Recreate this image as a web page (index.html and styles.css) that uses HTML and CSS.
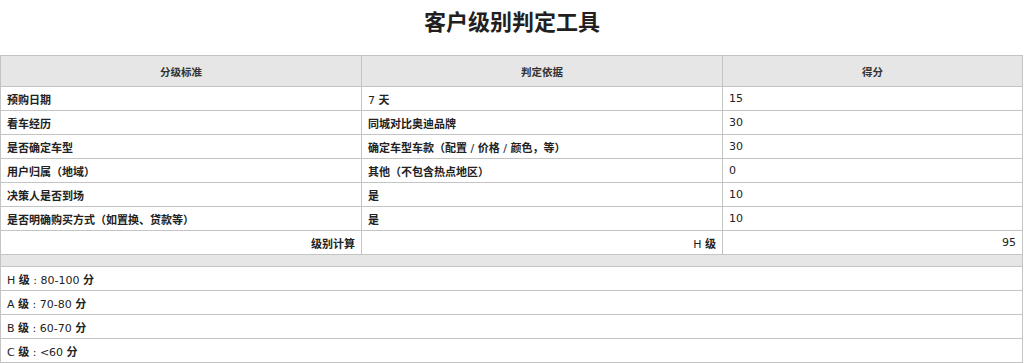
FILE: index.html
```html
<!DOCTYPE html>
<html lang="zh-CN">
<head>
<meta charset="utf-8">
<title>客户级别判定工具</title>
<link rel="stylesheet" href="styles.css">
</head>
<body>
<h1 class="title">客户级别判定工具</h1>
<table class="grid">
  <colgroup>
    <col class="c1">
    <col class="c2">
    <col class="c3">
  </colgroup>
  <thead>
    <tr class="head">
      <th>分级标准</th>
      <th>判定依据</th>
      <th>得分</th>
    </tr>
  </thead>
  <tbody>
    <tr><td>预购日期</td><td><span class="lat">7 </span>天</td><td class="num">15</td></tr>
    <tr><td>看车经历</td><td>同城对比奥迪品牌</td><td class="num">30</td></tr>
    <tr><td>是否确定车型</td><td>确定车型车款（配置<span class="lat"> / </span>价格<span class="lat"> / </span>颜色，等）</td><td class="num">30</td></tr>
    <tr><td>用户归属（地域）</td><td>其他（不包含热点地区）</td><td class="num">0</td></tr>
    <tr><td>决策人是否到场</td><td>是</td><td class="num">10</td></tr>
    <tr><td>是否明确购买方式（如置换、贷款等）</td><td>是</td><td class="num">10</td></tr>
    <tr class="total"><td>级别计算</td><td><span class="lat">H </span>级</td><td class="num">95</td></tr>
    <tr class="spacer"><td colspan="3"></td></tr>
    <tr class="level"><td colspan="3"><span class="lat">H </span>级<span class="lat"> : 80-100 </span>分</td></tr>
    <tr class="level"><td colspan="3"><span class="lat">A </span>级<span class="lat"> : 70-80 </span>分</td></tr>
    <tr class="level"><td colspan="3"><span class="lat">B </span>级<span class="lat"> : 60-70 </span>分</td></tr>
    <tr class="level"><td colspan="3"><span class="lat">C </span>级<span class="lat"> : &lt;60 </span>分</td></tr>
  </tbody>
</table>
</body>
</html>
```
FILE: styles.css
```css
html, body {
  margin: 0;
  padding: 0;
  background: #fff;
}
body {
  font-family: "DejaVu Sans", "Noto Sans CJK SC", sans-serif;
  color: #222;
}
.title {
  margin: 0;
  height: 55px;
  line-height: 40px;
  text-align: center;
  font-family: "Noto Sans CJK SC", sans-serif;
  font-size: 22px;
  font-weight: 700;
  color: #231f20;
}
.grid {
  width: 1023px;
  border-collapse: collapse;
  table-layout: fixed;
  font-size: 11px;
}
.c1 { width: 361px; }
.c2 { width: 361px; }
.grid th,
.grid td {
  border: 1px solid #c4c4c4;
  padding: 0 6px;
  height: 23px;
  text-align: left;
  white-space: nowrap;
  font-weight: 700;
}
.grid .head th {
  height: 30px;
  background: #e6e6e6;
  text-align: center;
  font-size: 10.5px;
  color: #333;
}
.grid td.num,
.grid .lat {
  font-weight: 400;
}
.grid .total td {
  text-align: right;
}
.grid .spacer td {
  height: 11px;
  background: #e6e6e6;
}
```
